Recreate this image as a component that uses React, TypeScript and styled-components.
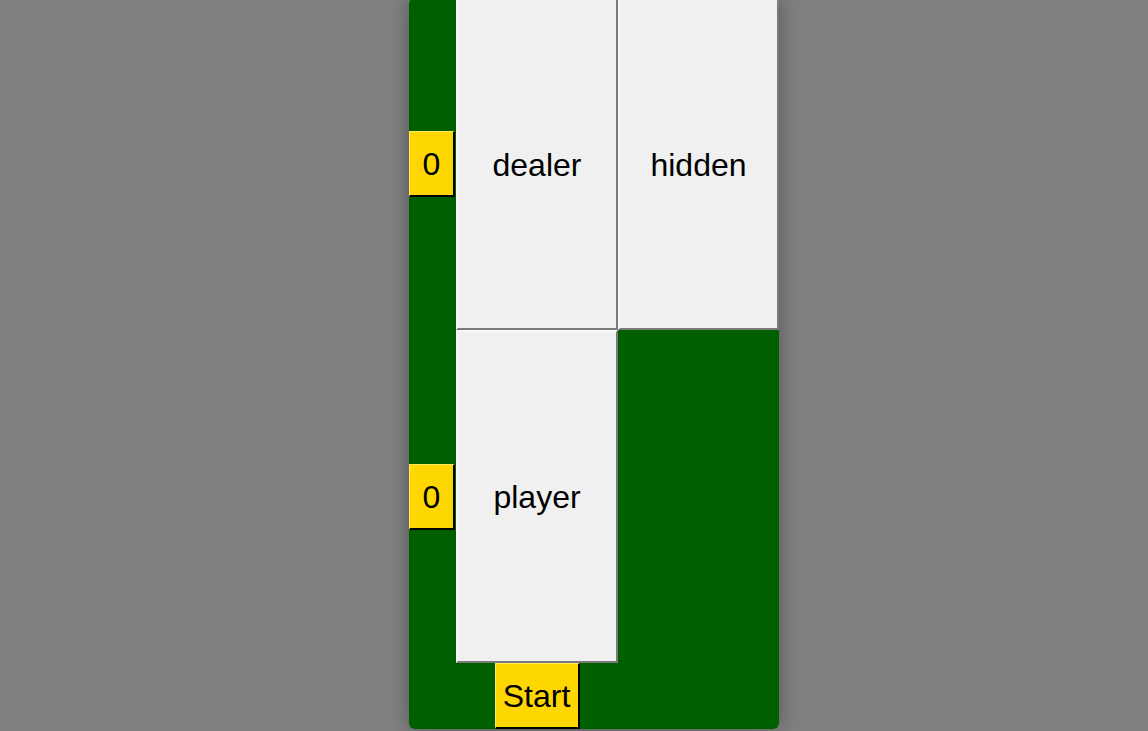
import React from "react";
import styled, { createGlobalStyle } from "styled-components";

const Global = createGlobalStyle`
  html, body {
    margin: 0;
    padding: 0;
    background: #808080;
    overflow: hidden;
  }
  body {
    font-family: "Liberation Sans", Arial, sans-serif;
  }
`;

const Page = styled.div`
  height: 731px;
  display: flex;
  justify-content: center;
  align-items: flex-start;
  padding-left: 40px;
  box-sizing: border-box;
`;

const Table = styled.div`
  margin-top: -2px;
  display: grid;
  grid-template-columns: 47px 162px 161px;
  grid-template-rows: 332px 333px 66px;
  background: #006000;
  border-radius: 6px;
  box-shadow: 0 0 20px rgba(0, 0, 0, 0.35);
  overflow: hidden;
`;

const BaseButton = styled.button`
  font-family: "Liberation Sans", Arial, sans-serif;
  font-size: 32px;
  color: #000;
  margin: 0;
  padding: 2px 0 0;
  box-sizing: border-box;
  display: flex;
  align-items: center;
  justify-content: center;
  cursor: pointer;
`;

const Score = styled(BaseButton)<{ $row: number }>`
  grid-column: 1;
  grid-row: ${(p) => p.$row};
  width: 46px;
  height: 66px;
  align-self: center;
  justify-self: start;
  background: #ffd700;
  border-style: solid;
  border-width: 1px 2px 2px 1px;
  border-color: #ffe866 #000 #000 #ffe866;
`;

const Card = styled(BaseButton)<{ $row: number; $col: number }>`
  grid-column: ${(p) => p.$col};
  grid-row: ${(p) => p.$row};
  width: 100%;
  height: 100%;
  background: #f0f0f0;
  border-style: solid;
  border-width: 2px;
  border-color: #f8f8f8 #7a7a7a #7a7a7a #f8f8f8;
`;

const StartButton = styled(BaseButton)`
  grid-column: 2;
  grid-row: 3;
  justify-self: center;
  width: 85px;
  height: 66px;
  background: #ffd700;
  border-style: solid;
  border-width: 1px 2px 2px 1px;
  border-color: #ffe866 #000 #000 #ffe866;
`;

export default function App() {
  return (
    <>
      <Global />
      <Page>
        <Table>
          <Score $row={1}>0</Score>
          <Card $row={1} $col={2}>dealer</Card>
          <Card $row={1} $col={3}>hidden</Card>
          <Score $row={2}>0</Score>
          <Card $row={2} $col={2}>player</Card>
          <StartButton>Start</StartButton>
        </Table>
      </Page>
    </>
  );
}
